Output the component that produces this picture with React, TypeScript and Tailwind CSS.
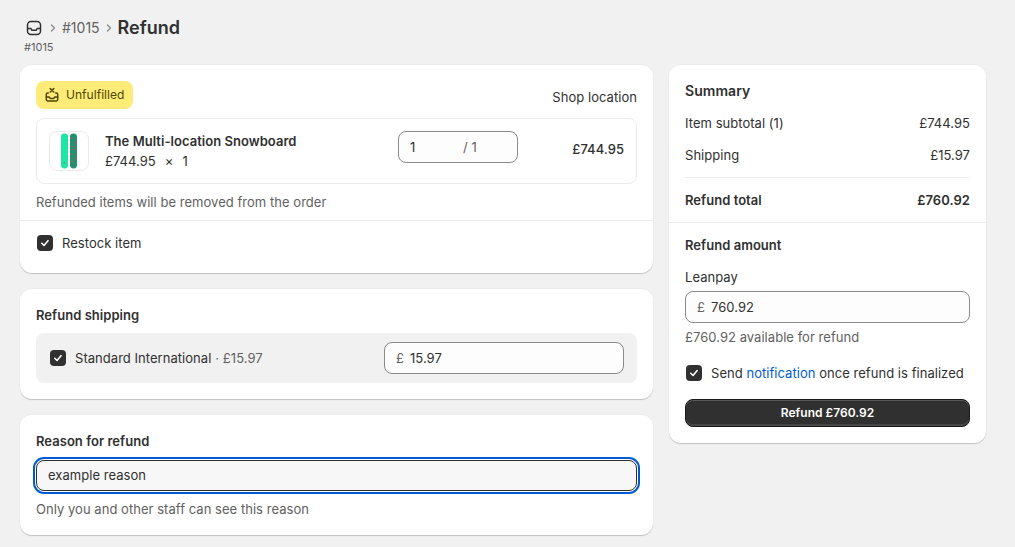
import type { ReactNode } from "react";

const cardClass =
  "bg-white rounded-xl border-t border-t-[#ebebeb] shadow-[0_1px_1px_rgba(0,0,0,0.2)]";

function Checkbox() {
  return (
    <span className="flex h-4 w-4 shrink-0 items-center justify-center rounded-[4px] bg-[#303030]">
      <svg viewBox="0 0 16 16" className="h-4 w-4" fill="none" stroke="#fff" strokeWidth="1.6" strokeLinecap="round" strokeLinejoin="round">
        <path d="M4.800 8.300l2.200 2.200 4-4.800" />
      </svg>
    </span>
  );
}

function MoneyInput({ value, className }: { value: string; className: string }) {
  return (
    <div className={`flex h-8 items-center rounded-lg border border-[#8a8a8a] bg-[#fdfdfd] pl-[11px] ${className}`}>
      <span className="text-[#616161]">£</span>
      <span className="ml-[6px]">{value}</span>
    </div>
  );
}

function SummaryRow({ label, value, bold, className }: { label: string; value: string; bold?: boolean; className?: string }) {
  return (
    <div className={`flex h-5 items-center justify-between ${bold ? "font-semibold" : ""} ${className ?? ""}`}>
      <span>{label}</span>
      <span>{value}</span>
    </div>
  );
}

function Heading({ children, className }: { children: ReactNode; className?: string }) {
  return <div className={`h-5 leading-5 font-semibold ${className ?? ""}`}>{children}</div>;
}

function UnfulfilledIcon() {
  return (
    <svg viewBox="0 0 16 16" className="h-4 w-4" fill="none" stroke="#4f4700" strokeWidth="1.5" strokeLinecap="round" strokeLinejoin="round">
      <path d="M6.200 1.600l3.600 3.400M9.800 1.600L6.200 5" />
      <path d="M4.300 6H3.600a1.300 1.300 0 0 0-1.300 1.300v5.200c0 .8.600 1.400 1.400 1.400h8.600c.8 0 1.400-.6 1.400-1.400V7.300a1.300 1.300 0 0 0-1.300-1.300h-.7" />
      <path d="M2.400 10h2.800l.9 1.400h3.800l.9-1.400h2.800" />
    </svg>
  );
}

function Chevron({ className }: { className: string }) {
  return (
    <svg viewBox="0 0 8 12" className={`h-3 w-2 ${className}`} fill="none" stroke="#8a8a8a" strokeWidth="1.300" strokeLinecap="round" strokeLinejoin="round">
      <path d="M2.500 3l3 3-3 3" />
    </svg>
  );
}

function Snowboards() {
  return (
    <svg viewBox="0 0 16 36" className="h-9 w-4">
      <rect x="0" y="0.500" width="7" height="35" rx="3.400" fill="#1fe6a4" />
      <rect x="9" y="0.500" width="7" height="35" rx="3.400" fill="#23916f" />
      <path d="M10.500 5l1.500 1M13 9l1.500 1M10.500 13l2 1M13 17l1.500-1M10.500 21l2 1M13 25l1.500 1M10.500 29l2-1" stroke="#a5604a" strokeWidth="1.200" />
      <circle cx="3.500" cy="30" r="1" fill="#5aa583" />
    </svg>
  );
}

export default function App() {
  return (
    <div
      className="h-[547px] w-[1015px] overflow-hidden bg-[#f1f1f1] text-[13px] leading-5 tracking-[0.04px] text-[#303030]"
      style={{ fontFamily: "Inter, 'Noto Sans', sans-serif" }}
    >
      <header className="h-[64px] pl-6">
        <div className="flex flex-col pt-[15px]">
          <div className="flex h-[26px] items-center">
            <svg viewBox="0 0 20 20" className="h-5 w-5" fill="none" stroke="#303030" strokeWidth="1.500" strokeLinejoin="round" strokeLinecap="round">
              <rect x="3.500" y="3.500" width="13" height="13" rx="3.500" />
              <path d="M3.700 10.500h3.200l1 1.800h4.200l1-1.800h3.200" />
            </svg>
            <Chevron className="ml-[5px]" />
            <span className="ml-[5px] text-sm tracking-normal text-[#616161]">#1015</span>
            <Chevron className="ml-[5px]" />
            <span className="ml-[5px] text-lg font-semibold tracking-normal">Refund</span>
          </div>
          <div className="h-4 text-[11px] leading-[13px] tracking-normal text-[#616161]">#1015</div>
        </div>
      </header>

      <main className="flex items-start gap-4 pl-5">
        <div className="flex w-[633px] flex-col gap-[15px]">
          <section className={`${cardClass} h-[209px]`}>
            <div className="flex items-end justify-between px-4 pt-4">
              <span className="flex h-7 w-[97px] items-center gap-[6px] rounded-lg bg-[#ffeb78] pl-2 text-[#4f4700]">
                <UnfulfilledIcon />
                <span className="text-[12px]">Unfulfilled</span>
              </span>
              <span className="mb-[2px]">Shop location</span>
            </div>
            <div className="mx-4 mt-[9px] flex h-[66px] items-start rounded-lg border border-[#ebebeb] px-3 pt-3">
              <div className="flex h-10 w-10 items-center justify-center rounded-lg border border-[#ebebeb]">
                <Snowboards />
              </div>
              <div className="ml-4 w-[293px]">
                <div className="font-semibold">The Multi-location Snowboard</div>
                <div>
                  £744.95<span className="ml-[9px]">×</span><span className="ml-[9px]">1</span>
                </div>
              </div>
              <div className="flex h-8 w-[120px] items-center rounded-lg border border-[#8a8a8a] bg-[#fdfdfd] pl-[11px]">
                <span className="w-[53px]">1</span>
                <span className="text-[#616161]">/ 1</span>
              </div>
              <span className="mt-2 ml-auto font-medium">£744.95</span>
            </div>
            <p className="mt-2 px-4 text-[#616161]">Refunded items will be removed from the order</p>
            <div className="mt-2 flex h-[44px] items-center gap-[9px] border-t border-[#ebebeb] pl-[17px]">
              <Checkbox />
              <span>Restock item</span>
            </div>
          </section>

          <section className={`${cardClass} h-[111px] px-4 pt-4`}>
            <Heading>Refund shipping</Heading>
            <div className="mt-2 flex h-[50px] items-center rounded-lg bg-[#f1f1f1] pl-[14px] pr-[13px]">
              <Checkbox />
              <span className="ml-[9px]">Standard International</span>
              <span className="ml-1 text-[#616161]">· £15.97</span>
              <MoneyInput value="15.97" className="ml-auto w-[240px]" />
            </div>
          </section>

          <section className={`${cardClass} h-[121px] px-4 pt-4`}>
            <Heading>Reason for refund</Heading>
            <div className="mt-[9px] flex h-[31px] items-center rounded-lg border border-[#303030] bg-[#f7f7f7] pb-px pl-[11px] outline-2 outline-offset-[1px] outline-[#005bd3]">
              example reason
            </div>
            <p className="mt-2 text-[#616161]">Only you and other staff can see this reason</p>
          </section>
        </div>

        <aside className={`${cardClass} h-[379px] w-[317px]`}>
          <div className="px-4 pt-4">
            <div className="text-sm leading-5 font-semibold">Summary</div>
            <SummaryRow label="Item subtotal (1)" value="£744.95" className="mt-3" />
            <SummaryRow label="Shipping" value="£15.97" className="mt-3" />
            <div className="mt-3 border-t border-[#ebebeb]" />
            <SummaryRow label="Refund total" value="£760.92" bold className="mt-3" />
          </div>
          <div className="mt-3 border-t border-[#ebebeb] px-4 pt-3">
            <Heading>Refund amount</Heading>
            <div className="mt-3">Leanpay</div>
            <MoneyInput value="760.92" className="mt-1 w-full" />
            <p className="mt-1 text-[#616161]">£760.92 available for refund</p>
            <div className="mt-[8px] flex h-[32px] items-center gap-[9px] pl-px pt-[4px]">
              <Checkbox />
              <span>
                Send <span className="text-[#005bd3]">notification</span> once refund is finalized
              </span>
            </div>
            <button
              type="button"
              className="mt-3 h-7 w-full rounded-lg border border-[#1a1a1a] bg-[#303030] text-[12px] font-semibold text-white shadow-[inset_0_1px_0_rgba(255,255,255,0.2),inset_0_-2px_0_rgba(255,255,255,0.1)]"
            >
              Refund £760.92
            </button>
          </div>
        </aside>
      </main>
    </div>
  );
}
